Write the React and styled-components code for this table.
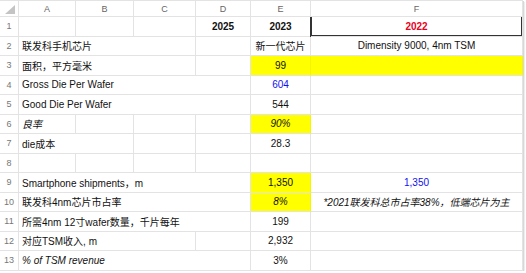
import React from "react";
import styled, { createGlobalStyle } from "styled-components";

const GlobalStyle = createGlobalStyle`
  html, body {
    margin: 0;
    padding: 0;
    background: #fff;
  }
  * {
    box-sizing: border-box;
  }
`;

const GRID = "#e3e3e3";
const YELLOW = "#ffff00";

const Sheet = styled.div`
  display: grid;
  grid-template-columns: 19px 57px 58px 62px 55px 60px 212px;
  grid-template-rows: 16px;
  grid-auto-rows: 19.5px;
  width: 523px;
  border-top: 1px solid ${GRID};
  font-family: "Liberation Sans", "Noto Sans CJK SC", Arial, sans-serif;
  font-size: 10px;
  color: #111;
  box-shadow: 1px 1px 0 #d8d8d8, 2px 2px 0 #eeeeee;
`;

const Corner = styled.div`
  position: relative;
  border-right: 1px solid ${GRID};
  border-bottom: 1px solid ${GRID};
  &::after {
    content: "";
    position: absolute;
    right: 3px;
    bottom: 2px;
    width: 0;
    height: 0;
    border-left: 10px solid transparent;
    border-bottom: 9px solid #c4c4c4;
  }
`;

const ColHead = styled.div`
  display: flex;
  align-items: center;
  justify-content: center;
  border-right: 1px solid ${GRID};
  border-bottom: 1px solid ${GRID};
  font-size: 9px;
  color: #666;
`;

const RowNum = styled.div`
  display: flex;
  align-items: center;
  justify-content: center;
  border-right: 1px solid ${GRID};
  border-bottom: 1px solid ${GRID};
  font-size: 9px;
  color: #777;
`;

const Cell = styled.div`
  grid-column: span ${(p) => p.$span || 1};
  display: flex;
  align-items: center;
  justify-content: ${(p) => (p.$align === "center" ? "center" : "flex-start")};
  padding: 0 3px;
  white-space: nowrap;
  overflow: visible;
  background: ${(p) => p.$bg || "transparent"};
  color: ${(p) => p.$color || "#111"};
  font-weight: ${(p) => (p.$bold ? 700 : 400)};
  font-style: ${(p) => (p.$italic ? "italic" : "normal")};
  border-right: 1px solid ${(p) => (p.$bg ? "rgba(0,0,0,0.04)" : GRID)};
  border-bottom: 1px solid ${GRID};
  box-shadow: ${(p) => (p.$selected ? "inset 1px 0 0 #333, inset -1px 0 0 #333, inset 0 -1px 0 #333, -1px 0 0 #333" : "none")};
`;

const columns = ["A", "B", "C", "D", "E", "F"];

const rows = [
  [{}, {}, {}, { v: "2025", align: "center", bold: true }, { v: "2023", align: "center", bold: true }, { v: "2022", align: "center", bold: true, color: "#e8001c", selected: true }],
  [{ v: "联发科手机芯片", span: 3 }, {}, { v: "新一代芯片", align: "center" }, { v: "Dimensity 9000, 4nm TSM", align: "center" }],
  [{ v: "面积，平方毫米", span: 3 }, {}, { v: "99", align: "center", bg: YELLOW }, { bg: YELLOW }],
  [{ v: "Gross Die Per Wafer", span: 4 }, { v: "604", align: "center", color: "#1010f0" }, {}],
  [{ v: "Good Die Per Wafer", span: 4 }, { v: "544", align: "center" }, {}],
  [{ v: "良率", italic: true }, {}, {}, {}, { v: "90%", align: "center", bg: YELLOW, italic: true }, {}],
  [{ v: "die成本", span: 2 }, {}, {}, { v: "28.3", align: "center" }, {}],
  [{}, {}, {}, {}, {}, {}],
  [{ v: "Smartphone shipments，m", span: 4 }, { v: "1,350", align: "center", bg: YELLOW }, { v: "1,350", align: "center", color: "#1010f0" }],
  [{ v: "联发科4nm芯片市占率", span: 4 }, { v: "8%", align: "center", bg: YELLOW, italic: true }, { v: "*2021联发科总市占率38%，低端芯片为主", align: "center", italic: true }],
  [{ v: "所需4nm 12寸wafer数量，千片每年", span: 4 }, { v: "199", align: "center" }, {}],
  [{ v: "对应TSM收入, m", span: 3 }, {}, { v: "2,932", align: "center" }, {}],
  [{ v: "% of TSM revenue", span: 4, italic: true }, { v: "3%", align: "center" }, {}],
];

export default function App() {
  return (
    <>
      <GlobalStyle />
      <Sheet>
        <Corner />
        {columns.map((c) => (
          <ColHead key={c}>{c}</ColHead>
        ))}
        {rows.map((cells, r) => (
          <React.Fragment key={r}>
            <RowNum>{r + 1}</RowNum>
            {cells.map((cell, i) => (
              <Cell
                key={i}
                $span={cell.span}
                $align={cell.align}
                $bg={cell.bg}
                $bold={cell.bold}
                $italic={cell.italic}
                $color={cell.color}
                $selected={cell.selected}
              >
                {cell.v}
              </Cell>
            ))}
          </React.Fragment>
        ))}
      </Sheet>
    </>
  );
}
